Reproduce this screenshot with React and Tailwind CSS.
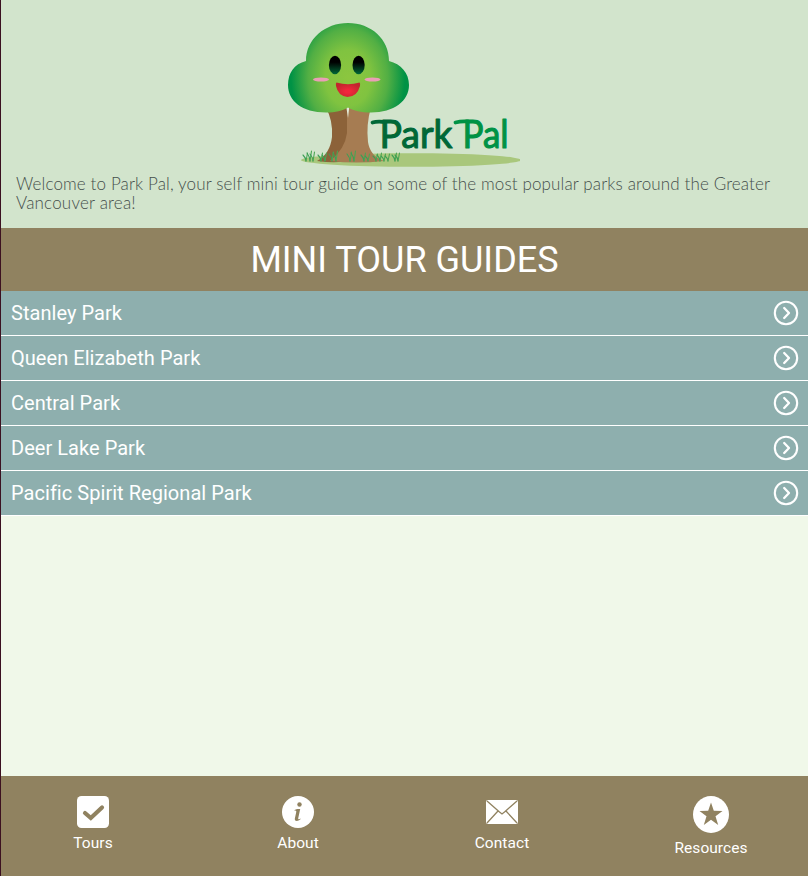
import React from 'react';

const parks = ['Stanley Park', 'Queen Elizabeth Park', 'Central Park', 'Deer Lake Park', 'Pacific Spirit Regional Park'];

// Blade clusters along the foot of the trunk: [x, height]
const grass = [[26, 8], [30, 10], [33, 9], [41, 8], [45, 8], [52, 9], [56, 10], [70, 9], [74, 10], [84, 8], [88, 7], [96, 7], [100, 8], [104, 7], [108, 7], [115, 8], [118, 8]];

function Logo() {
  return (
    <svg className="block h-[150px] w-[240px]" viewBox="0 0 240 150" role="img" aria-label="Park Pal">
      <defs>
        <radialGradient id="leaf" gradientUnits="userSpaceOnUse" cx="0" cy="0" r="1" gradientTransform="translate(69 59) scale(57 70)">
          <stop offset="0" stopColor="#8cc63f" />
          <stop offset=".4" stopColor="#80c340" />
          <stop offset=".7" stopColor="#52af44" />
          <stop offset="1" stopColor="#009245" />
        </radialGradient>
        <linearGradient id="eye" x1="0" y1="0" x2="0" y2="1">
          <stop offset=".35" stopColor="#000" />
          <stop offset="1" stopColor="#006837" />
        </linearGradient>
        <radialGradient id="mouth" cx=".5" cy=".6" r=".55">
          <stop offset=".2" stopColor="#f0283c" />
          <stop offset="1" stopColor="#c1272d" />
        </radialGradient>
      </defs>
      <ellipse cx="131" cy="141" rx="110" ry="6.8" fill="#a9c77c" />
      <path d="M46 89H72V141Q58 145 37 142Q50 135 52 118Q53 101 46 89Z" fill="#8c6239" />
      <path d="M67 88H91Q86 106 88 123Q90 137 104 142Q76 145 50 142Q65 130 67 114Z" fill="#a67c52" />
      <path d="M66 86H69.500L68 99Z" fill="#e3ecda" />
      <path transform="translate(-1 0)" d="M27 42C15 45 9 54 9 66C9 82 23 93.500 47 93.500C57 93.500 63 92 69 88.500C75 92 82 93.500 92 93.500C115 93.500 130 82 130 66C130 54 122 45 110 42C110 20 92 4 69 4S27 20 27 42Z" fill="url(#leaf)" />
      <ellipse cx="55" cy="46" rx="6.1" ry="9.2" fill="url(#eye)" />
      <ellipse cx="78.6" cy="46" rx="6.1" ry="9.2" fill="url(#eye)" />
      <ellipse cx="41" cy="60.5" rx="8" ry="2" fill="#ea9fb6" />
      <ellipse cx="92.5" cy="60.5" rx="8" ry="2" fill="#ea9fb6" />
      <path d="M56.500 63.500Q68 67 79.500 63.500Q80.500 64 80 67Q77 78 67.500 78Q58 77 56 67Q55.500 64 56.500 63.500Z" fill="url(#mouth)" />
      <g fill="none" strokeLinecap="round">
        {grass.map(([x, h]) => (
          <g key={x} strokeWidth="1.100">
            <path d={`M${x} 142Q${x} ${143 - h / 2} ${x - 3} ${144 - h}`} stroke="#3c9f55" />
            <path d={`M${x} 142Q${x + 1} ${141 - h / 2} ${x + 1.5} ${142 - h}`} stroke="#4aa653" />
          </g>
        ))}
      </g>
      <g fontFamily="Lato, sans-serif" fontSize="38" strokeWidth="1.100" strokeLinejoin="round">
        <text x="99.500" y="129" textLength="73" lengthAdjust="spacingAndGlyphs" fill="#006837" stroke="#006837">Park</text>
        <text x="182.500" y="128.500" textLength="46" lengthAdjust="spacingAndGlyphs" fill="#009245" stroke="#009245">Pal</text>
        <path d="M92.500 103.500Q97 102 105 103" fill="none" stroke="#006837" strokeWidth="3.800" strokeLinecap="round" />
        <path d="M175.500 103.500Q181 102 188 102.500" fill="none" stroke="#009245" strokeWidth="3.800" strokeLinecap="round" />
      </g>
    </svg>
  );
}

function CheckIcon() {
  return (
    <svg className="block size-8" viewBox="0 0 32 32">
      <rect width="32" height="32" rx="4.5" fill="#fff" />
      <path d="M8 17L13.800 22L25 11.500" fill="none" stroke="#908260" strokeWidth="4.200" strokeLinecap="round" strokeLinejoin="miter" />
    </svg>
  );
}

function InfoIcon() {
  return (
    <svg className="block size-8" viewBox="0 0 32 32">
      <circle cx="16" cy="16" r="16" fill="#fff" />
      <circle cx="17.500" cy="8.500" r="2.200" fill="#908260" />
      <path d="M12 14.200C14 13 16 12.800 18.200 13L16.200 22.200C16 23.600 17 23.600 19 22.600C17.500 25 12.500 26.500 12.800 22.800L14.300 15.800C14.500 14.700 13.700 14.500 12 14.200Z" fill="#908260" />
    </svg>
  );
}

function MailIcon() {
  return (
    <svg className="block size-8" viewBox="0 0 32 32">
      <rect y="4" width="32" height="24" rx="2" fill="#fff" />
      <path d="M1 5L13.500 16L16 18L18.500 16L31 5M1 27L12 15M31 27L20 15" fill="none" stroke="#908260" strokeWidth="1.300" />
    </svg>
  );
}

function StarIcon() {
  return (
    <svg className="block h-[37px] w-9" viewBox="0 0 36 37">
      <ellipse cx="18" cy="18.500" rx="18" ry="18.500" fill="#fff" />
      <path d="M18 6.500L20.800 14.800L29.500 15L22.500 20.200L25.200 29L18 23.800L10.800 29L13.500 20.200L6.500 15L15.200 14.800Z" fill="#908260" />
    </svg>
  );
}

const tabs = [
  { label: 'Tours', Icon: CheckIcon, space: 'ml-[42px]' },
  { label: 'About', Icon: InfoIcon, space: 'ml-[105px]' },
  { label: 'Contact', Icon: MailIcon, space: 'ml-[104px]' },
  { label: 'Resources', Icon: StarIcon, space: 'ml-[109px]' },
];

export default function App() {
  return (
    <div className="flex h-screen flex-col overflow-hidden border-l border-[#3b1020] bg-[#f0f8e9] font-[Roboto,sans-serif] text-white">
      <header className="h-[228px] shrink-0 bg-[#d2e4cc] pt-[19px]">
        <div className="ml-[279px]"><Logo /></div>
        <p className="ml-[15px] mt-[5px] whitespace-nowrap font-[Lato,sans-serif] text-[17px] font-light leading-[19px] text-[#454f4b]">
          <span className="tracking-[0.13px]">Welcome to Park Pal, your self mini tour guide on some of the most popular parks around the Greater</span>
          <br />
          <span className="tracking-[0.2px]">Vancouver area!</span>
        </p>
      </header>
      <h1 className="flex h-[63px] shrink-0 items-center justify-center bg-[#908260] text-[36px] leading-none">MINI TOUR GUIDES</h1>
      <ul>
        {parks.map((park) => (
          <li key={park} className="flex h-[45px] items-center justify-between border-b border-white bg-[#8eafae] pl-[10px] pr-[9px] text-[20px] font-[450] tracking-[0.04px]">
            <span>{park}</span>
            <svg className="size-[26px]" viewBox="0 0 26 26" fill="none" stroke="#fff" strokeLinecap="round" strokeLinejoin="round">
              <circle cx="13" cy="13" r="11.200" strokeWidth="2.100" />
              <path d="M11.200 8L16 13L11.200 18" strokeWidth="2.300" />
            </svg>
          </li>
        ))}
      </ul>
      <nav className="mt-auto flex h-[100px] shrink-0 bg-[#908260] pt-5">
        {tabs.map(({ label, Icon, space }) => (
          <a key={label} className={`flex w-[100px] shrink-0 flex-col items-center ${space}`}>
            <Icon />
            <span className="mt-[5px] text-[15.500px] leading-5 tracking-[0.05px]">{label}</span>
          </a>
        ))}
      </nav>
    </div>
  );
}
